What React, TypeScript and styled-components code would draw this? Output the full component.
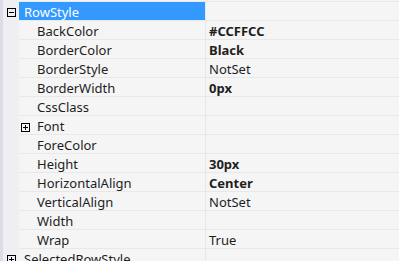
import React from 'react';
import styled, { createGlobalStyle } from 'styled-components';

const GlobalStyle = createGlobalStyle`
    html, body {
        margin: 0;
        padding: 0;
        background: #f5f5f5;
        overflow: hidden;
    }
`;

const StyledGrid = styled.div`
    width: 399px;
    height: 261px;
    overflow: hidden;
    font-family: 'Noto Sans', 'Open Sans', sans-serif;
    font-size: 13px;
    color: #1e1e1e;
    border-left: 3px solid #dcdce8;
    box-sizing: border-box;
`;

const StyledRows = styled.div`
    margin-top: -17px;
`;

const StyledRow = styled.div`
    display: flex;
    height: 19px;
`;

const StyledGutter = styled.div`
    width: 16px;
    flex: none;
    display: flex;
    align-items: center;
    justify-content: flex-start;
    padding-left: 4px;
    box-sizing: border-box;
    background: #efeff3;
`;

const StyledExpander = styled.div<{ $plus?: boolean }>`
    position: relative;
    width: 9px;
    height: 9px;
    box-sizing: border-box;
    border: 1px solid #000;
    margin-top: 1px;

    &::before {
        content: '';
        position: absolute;
        left: 1px;
        top: 3px;
        width: 5px;
        height: 1px;
        background: #000;
    }

    &::after {
        content: '';
        display: ${(p) => (p.$plus ? 'block' : 'none')};
        position: absolute;
        left: 3px;
        top: 1px;
        width: 1px;
        height: 5px;
        background: #000;
    }
`;

const StyledInlineExpander = styled(StyledExpander)`
    display: inline-block;
    vertical-align: -1px;
    margin: 0 7px 0 -16px;
`;

const StyledName = styled.div<{ $indent: number; $selected?: boolean }>`
    height: 16px;
    flex: none;
    box-sizing: content-box;
    padding: 2px 0 0 ${(p) => p.$indent}px;
    width: ${(p) => 186 - p.$indent}px;
    line-height: 17px;
    white-space: nowrap;
    overflow: hidden;
    border-bottom: 1px solid #e8e8e8;
    border-right: 1px solid #e8e8e8;
    background: ${(p) => (p.$selected ? '#3399ff' : '#f5f5f5')};
    color: ${(p) => (p.$selected ? '#fff' : '#1e1e1e')};
`;

const StyledValue = styled.div<{ $bold?: boolean }>`
    flex: 1;
    height: 16px;
    padding: 2px 0 0 3px;
    line-height: 17px;
    white-space: nowrap;
    border-bottom: 1px solid #e8e8e8;
    font-weight: ${(p) => (p.$bold ? 700 : 400)};
`;

type Prop = {
    name: string;
    value?: string;
    bold?: boolean;
    child?: boolean;
    expander?: 'plus' | 'minus';
    selected?: boolean;
};

const props: Prop[] = [
    { name: '' },
    { name: 'RowStyle', expander: 'minus', selected: true },
    { name: 'BackColor', value: '#CCFFCC', bold: true, child: true },
    { name: 'BorderColor', value: 'Black', bold: true, child: true },
    { name: 'BorderStyle', value: 'NotSet', child: true },
    { name: 'BorderWidth', value: '0px', bold: true, child: true },
    { name: 'CssClass', child: true },
    { name: 'Font', child: true, expander: 'plus' },
    { name: 'ForeColor', child: true },
    { name: 'Height', value: '30px', bold: true, child: true },
    { name: 'HorizontalAlign', value: 'Center', bold: true, child: true },
    { name: 'VerticalAlign', value: 'NotSet', child: true },
    { name: 'Width', child: true },
    { name: 'Wrap', value: 'True', child: true },
    { name: 'SelectedRowStyle', expander: 'plus' },
];

export default function App() {
    return (
        <>
            <GlobalStyle />
            <StyledGrid>
                <StyledRows>
                    {props.map((p, i) => (
                        <StyledRow key={i}>
                            <StyledGutter>
                                {!p.child && p.expander && (
                                    <StyledExpander $plus={p.expander === 'plus'} />
                                )}
                            </StyledGutter>
                            <StyledName $indent={p.child ? 18 : 5} $selected={p.selected}>
                                {p.child && p.expander && (
                                    <StyledInlineExpander $plus={p.expander === 'plus'} />
                                )}
                                {p.name}
                            </StyledName>
                            <StyledValue $bold={p.bold}>{p.value}</StyledValue>
                        </StyledRow>
                    ))}
                </StyledRows>
            </StyledGrid>
        </>
    );
}
